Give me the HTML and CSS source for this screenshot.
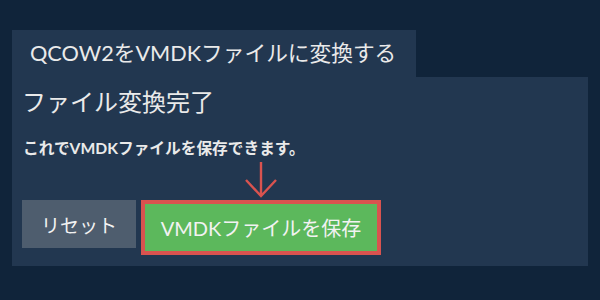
FILE: index.html
```html
<!DOCTYPE html>
<html lang="ja">
<head>
    <meta charset="UTF-8">
    <meta name="viewport" content="width=device-width, initial-scale=1.0">
    <title>QCOW2をVMDKファイルに変換する</title>
    <link rel="stylesheet" href="styles.css">
</head>
<body>
    <div id="converter">
        <div class="tab">QCOW2をVMDKファイルに変換する</div>

        <div class="panel">
            <h2 class="panel-title">ファイル変換完了</h2>
            <p class="panel-text">これでVMDKファイルを保存できます。</p>

            <div class="actions">
                <button class="btn btn-reset">リセット</button>
                <div class="save-wrap">
                    <svg class="hint-arrow" width="32" height="36" viewBox="0 0 32 36" aria-hidden="true">
                        <path d="M16 0 V34 M1 18 L16 34 L31 18" fill="none" stroke="#d9534f" stroke-width="2.4"/>
                    </svg>
                    <button class="btn btn-save">VMDKファイルを保存</button>
                </div>
            </div>
        </div>
    </div>
</body>
</html>
```

FILE: styles.css
```css
body, html {
    margin: 0;
    padding: 0;
    height: 100%;
    background-color: #10243a;
    font-family: 'Lato', 'Noto Sans CJK JP', sans-serif;
    color: #eaeaea;
    overflow: hidden;
}

#converter {
    padding: 30px 12px 0 12px;
}

.tab {
    display: inline-block;
    background-color: #223750;
    font-size: 21.7px;
    line-height: 47px;
    height: 47px;
    padding: 0 20px 0 18px;
}

.panel {
    background-color: #223750;
    height: 189px;
    box-sizing: border-box;
    padding: 10px 10px 0 10px;
}

.panel-title {
    margin: 0;
    font-size: 24px;
    font-weight: normal;
    line-height: 30px;
}

.panel-text {
    margin: 21px 0 0 1px;
    font-size: 15.7px;
    font-weight: bold;
    line-height: 20px;
}

.actions {
    display: flex;
    align-items: flex-start;
    gap: 5px;
    margin-top: 42px;
}

.btn {
    font-family: inherit;
    color: #f2f2f2;
    border: none;
    cursor: pointer;
    margin: 0;
}

.btn-reset {
    width: 114px;
    height: 48px;
    background-color: #4e5d6e;
    font-size: 19px;
}

.save-wrap {
    position: relative;
}

.hint-arrow {
    position: absolute;
    left: 50%;
    top: -38px;
    margin-left: -16px;
}

.btn-save {
    width: 240px;
    height: 55px;
    background-color: #5cb85c;
    border: 4px solid #d9534f;
    font-size: 20px;
}
```
